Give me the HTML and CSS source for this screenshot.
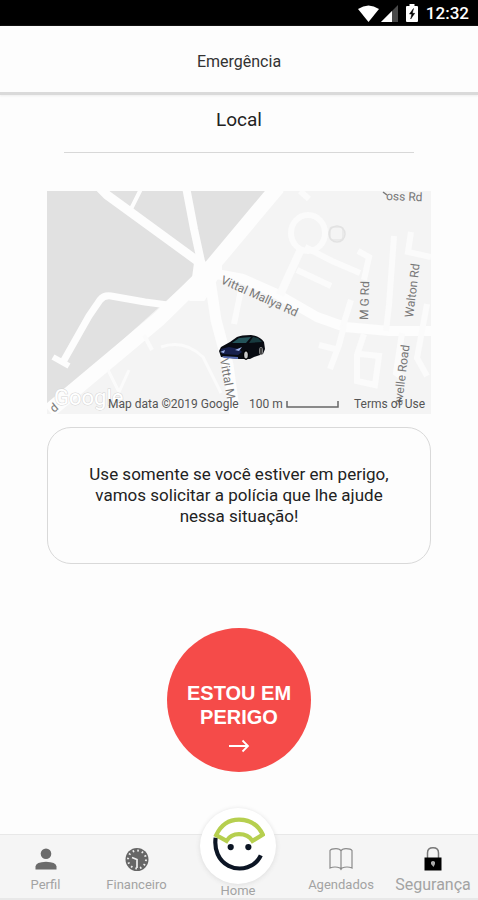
FILE: index.html
```html
<!DOCTYPE html>
<html lang="pt-BR">
<head>
<meta charset="utf-8">
<meta name="viewport" content="width=device-width, initial-scale=1">
<title>Emergência</title>
<link rel="stylesheet" href="styles.css">
</head>
<body>
<div class="status-bar">
  <svg class="status-wifi" viewBox="0 0 21 17" aria-hidden="true"><path d="M0 4Q10.500 -3 21 4L10.500 17Z" fill="#fff"/></svg>
  <svg class="status-signal" viewBox="0 0 17 17" aria-hidden="true"><path d="M17 0V17H0Z" fill="#4a4a4a"/><path d="M11 6V17H0Z" fill="#fff"/></svg>
  <svg class="status-battery" viewBox="0 0 12 18" aria-hidden="true"><path d="M3.500 0H8.500V2H11Q12 2 12 3V17Q12 18 11 18H1Q0 18 0 17V3Q0 2 1 2H3.500Z" fill="#fff"/><path d="M7.500 4.500L3.500 10H5.800L4.700 15L8.700 9.300H6.300Z" fill="#000" stroke="#000" stroke-width=".5"/></svg>
  <time class="status-time">12:32</time>
</div>
<header class="header"><h1 class="header-title">Emergência</h1></header>
<main class="content">
  <h2 class="place">Local</h2>
  <svg class="map" viewBox="48 191 384 223" role="img" aria-label="Mapa">
    <rect x="48" y="191" width="384" height="223" fill="#f4f4f4"/>
    <path d="M48 191H268L207 265L48 408Z" fill="#e1e1e1"/>
    <g fill="none" stroke="#fdfdfd" stroke-linejoin="round">
      <path d="M279 187L207 273L160 319L50 411" stroke-width="15"/>
      <path d="M99 186L108 195L130 211L204 265" stroke-width="9"/>
      <path d="M143 187L131 211" stroke-width="4"/>
      <path d="M187 187L195 229L203 266" stroke-width="8"/>
      <path d="M176 306L146 302L112 296Q105 295 101 300L90 316L64 362" stroke-width="7"/>
      <path d="M54 357L70 366" stroke-width="6"/>
      <path d="M200 262L211 280L217 320L229 365L236 416" stroke-width="11"/>
      <path d="M196 263H222V272L205 300H191Z" fill="#fdfdfd" stroke-width="2"/>
      <path d="M207 272L244 279L278 294L318 317L346 327L390 331H434" stroke-width="10"/>
    </g>
    <g fill="none" stroke="#fbfbfb" stroke-width="6">
      <path d="M301 191L310 199"/>
      <ellipse cx="309" cy="233" rx="17" ry="18"/>
      <path d="M303 247L290 275L281 295" stroke-width="8"/>
      <path d="M306 247L333 261L361 273"/><path d="M298 270L332 286"/>
      <path d="M359 251L370 257L365 280"/><path d="M395 236L390 305L387 331"/>
      <path d="M412 232L409 252L432 257"/>
      <path d="M242 290L235 324"/><path d="M352 300L343 329"/>
      <path d="M345 326L340 345L331 369"/><path d="M320 345L340 350"/>
      <path d="M365 334L358 355V381L376 385L380 356L361 354"/>
      <path d="M403 333L397 373L404 378"/><path d="M428 304L418 358L428 376"/>
      <path d="M145 335L153 350" stroke-width="4"/>
      <path d="M162 347Q185 339 204 357L222 393" stroke-width="3"/>
      <path d="M109 370L120 392L130 370" stroke-width="3"/>
    </g>
    <rect x="331" y="227" width="13" height="13" rx="3" fill="none" stroke="#e6e6e6" stroke-width="1.500"/>
    <circle cx="338" cy="234" r="8" fill="none" stroke="#e2e2e2" stroke-width="1.500"/>
    <g class="map-road">
      <text transform="translate(221 283) rotate(24)">Vittal Mallya Rd</text>
      <text transform="translate(369 320) rotate(-88)">M G Rd</text>
      <text transform="translate(414 318) rotate(-83)">Walton Rd</text>
      <text transform="translate(403 406) rotate(-83)">avelle Road</text>
      <text transform="translate(387 200) rotate(2)">oss Rd</text>
      <text transform="translate(221 359) rotate(80)">Vittal M</text>
      <text transform="translate(55 413) rotate(-40)">d</text>
    </g>
    <path d="M384 192L388 195" stroke="#777" stroke-width="1.500"/>
    <g>
      <path d="M220 351L222 347L231 342L238 337Q242 335 252 335Q261 336 265 342L266 349L264 354L255 357L251 359H240L222 357Z" fill="#080b12"/>
      <path d="M233 343L240 338L252 337L247 343Z" fill="#24545a"/>
      <path d="M250 343L254 337L259 338L263 342Z" fill="#183a3f"/>
      <path d="M222 349L230 347L240 349L243 352L239 355L223 354Z" fill="#17204d"/>
      <path d="M221 352L226 350L225 353ZM236 350L243 347L240 351Z" fill="#9fb3ea"/>
      <path d="M223 356L239 357V359L225 358Z" fill="#596eb5"/>
      <ellipse cx="247" cy="355" rx="3" ry="5" fill="#000"/><ellipse cx="247" cy="355" rx="1.800" ry="3.500" fill="#c8c8c8"/>
      <ellipse cx="262" cy="351" rx="2" ry="4" fill="#888"/><path d="M262 348V354" stroke="#000" stroke-width="1"/>
    </g>
    <text class="map-brand" x="55" y="405">Google</text>
    <g class="map-note">
      <text x="109" y="408">Map data ©2019 Google</text>
      <text x="250" y="408">100 m</text>
      <text x="355" y="408">Terms of Use</text>
    </g>
    <path d="M288 401V407H339V401" fill="none" stroke="#666" stroke-width="1.500"/>
  </svg>
  <p class="notice">Use somente se você estiver em perigo, vamos solicitar a polícia que lhe ajude nessa situação!</p>
  <button class="alarm" type="button">
    <span>ESTOU EM<br>PERIGO</span>
    <svg class="alarm-arrow" viewBox="0 0 22 14" aria-hidden="true"><path d="M1 7H20M14.500 1.500L20 7L14.500 12.500" fill="none" stroke="#fff" stroke-width="1.800"/></svg>
  </button>
</main>
<nav class="nav">
  <a class="nav-item" href="#perfil">
    <svg class="nav-icon" viewBox="0 0 24 24" aria-hidden="true"><circle cx="12" cy="5.800" r="5.300" fill="#6b6b6b"/><path d="M1.500 21.500V18.500Q2 14 12 13.700Q22 14 22.500 18.500V21.500Z" fill="#6b6b6b"/></svg>
    <span>Perfil</span>
  </a>
  <a class="nav-item" href="#financeiro">
    <svg class="nav-icon" viewBox="0 0 24 24" aria-hidden="true"><circle cx="12" cy="11.500" r="11.500" fill="#666"/><circle cx="12" cy="11.500" r="9" fill="none" stroke="#ededed" stroke-width="2" stroke-dasharray="1.600 3.112"/><path d="M7 9.500L12 11.500V20" fill="none" stroke="#f0f0f0" stroke-width="1.700"/></svg>
    <span>Financeiro</span>
  </a>
  <a class="nav-item nav-home" href="#home">
    <span class="home-disc"><svg class="home-logo" viewBox="0 0 50 52" aria-hidden="true">
      <path d="M2.500 20C1 31 5 42 15 47C27 53 41 48 46 37" fill="none" stroke="#0c1524" stroke-width="4"/>
      <path d="M3 17.500Q10 2.500 25 2.500Q41 2.500 48 17L38 23Q34 16.500 25 16.500Q17 16.500 13 23Z" fill="#fff" stroke="#b6cf4f" stroke-width="4"/>
      <circle cx="17" cy="29" r="3" fill="#0c1524"/><circle cx="34" cy="29" r="3" fill="#0c1524"/>
    </svg></span>
    <span>Home</span>
  </a>
  <a class="nav-item" href="#agendados">
    <svg class="nav-icon" viewBox="0 0 24 24" aria-hidden="true"><path d="M12 3Q11 .6 7 .6Q2 .6 1 2.500V20Q6 18 11 20L12 21.500L13 20Q18 18 23 20V2.500Q22 .6 17 .6Q13 .6 12 3V21" fill="none" stroke="#8b8b8b" stroke-width="1.200"/></svg>
    <span>Agendados</span>
  </a>
  <a class="nav-item nav-safety" href="#seguranca">
    <svg class="nav-icon nav-lock" viewBox="0 0 24 24" aria-hidden="true"><path d="M6.500 12V6Q6.500 .8 12 .8Q17.500 .8 17.500 6V12" fill="none" stroke="#777" stroke-width="1.500"/><path d="M3.500 10.500H20.500V23.500H3.500Z" fill="#000"/><path d="M10 15Q12 13 14 15V17L12.500 20L10 17Z" fill="#aaa"/></svg>
    <span>Segurança</span>
  </a>
</nav>
</body>
</html>
```
FILE: styles.css
```css
* { box-sizing: border-box; }
body {
  margin: 0;
  min-height: 100vh;
  display: flex;
  flex-direction: column;
  background: #fdfdfd;
  color: #222;
  font-family: Roboto, "Liberation Sans", sans-serif;
}
.status-bar {
  display: flex;
  align-items: center;
  justify-content: flex-end;
  height: 26px;
  padding: 0 9px;
  background: #000;
  color: #fff;
}
.status-wifi { width: 21px; height: 17px; }
.status-signal { width: 17px; height: 17px; margin-left: 2px; }
.status-battery { width: 12px; height: 18px; margin: 0 8px; }
.status-time { font-size: 17px; font-weight: 500; line-height: 26px; }
.header {
  display: flex;
  align-items: center;
  justify-content: center;
  height: 69px;
  border-bottom: 3px solid #dadada;
  box-shadow: 0 1px 2px #eee;
}
.header-title { margin: 0; padding-top: 6px; font-size: 16px; font-weight: 400; line-height: 20px; color: #333; }
.content {
  flex: 1;
  display: flex;
  flex-direction: column;
  align-items: center;
  padding: 0 47px;
}
.place {
  align-self: stretch;
  margin: 0 17px 38px;
  padding: 13px 0 20px;
  border-bottom: 1px solid #d8d8d8;
  font-size: 19px;
  font-weight: 400;
  line-height: 24px;
  text-align: center;
}
.map { display: block; width: 100%; }
.map-road { font-size: 12px; fill: #777; }
.map-note { font-size: 12px; fill: #555; }
.map-brand { font-size: 22px; fill: #fff; stroke: #d4d4d4; stroke-width: 1px; paint-order: stroke; }
.notice {
  align-self: stretch;
  margin: 13px 0 64px;
  padding: 36px 32px;
  border: 1px solid #d9d9d9;
  border-radius: 24px;
  font-size: 17px;
  line-height: 21px;
  text-align: center;
}
.alarm {
  display: flex;
  flex-direction: column;
  align-items: center;
  width: 144px;
  height: 144px;
  padding: 53px 0 0;
  border: 0;
  border-radius: 50%;
  background: #f54b49;
  color: #fff;
  font: bold 20px/24px "Liberation Sans", sans-serif;
}
.alarm-arrow { width: 22px; height: 14px; margin-top: 10px; }
.nav {
  display: grid;
  grid-template-columns: 91fr 91fr 112fr 94fr 90fr;
  grid-template-rows: minmax(0, 1fr);
  height: 66px;
  border-top: 1px solid #e8e8e8;
  border-bottom: 2px solid #e8e8e8;
  background: #f5f5f5;
}
.nav-item {
  display: flex;
  flex-direction: column;
  align-items: center;
  justify-content: flex-end;
  gap: 4px;
  padding-bottom: 4px;
  color: #a3a3a3;
  font-size: 13px;
  line-height: 18px;
  text-decoration: none;
}
.nav-icon { width: 24px; height: 24px; }
.nav-home { gap: 0; padding-bottom: 0; line-height: 14px; }
.home-disc {
  display: flex;
  align-items: center;
  justify-content: center;
  flex: none;
  width: 76px;
  height: 76px;
  padding: 0 0 4px 2px;
  border-radius: 50%;
  background: #fff;
  box-shadow: 0 1px 5px #ddd;
}
.home-logo { width: 52px; height: 54px; }
.nav-safety { gap: 5px; font-size: 16px; }
```
